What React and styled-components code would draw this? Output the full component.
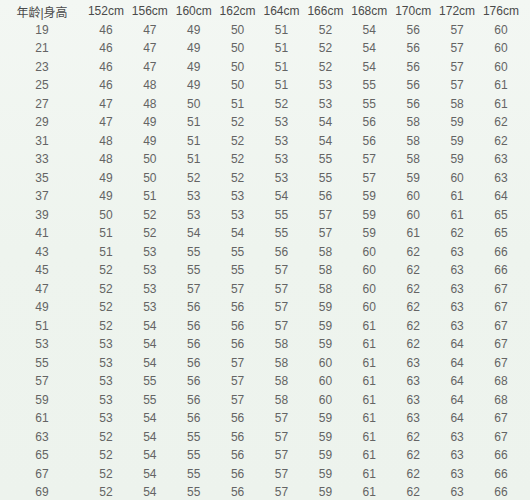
import React from "react";
import styled, { createGlobalStyle } from "styled-components";

const GlobalStyle = createGlobalStyle`
  html, body {
    margin: 0;
    padding: 0;
    background: #eef4ee;
  }
  body {
    font-family: "Liberation Sans", Arial, sans-serif;
  }
`;

const Page = styled.div`
  width: 530px;
  height: 500px;
  box-sizing: border-box;
  padding-top: 2px;
  background: linear-gradient(180deg, #f3f7f3 0%, #eef4ee 50%, #edf3ed 100%);
  overflow: hidden;
`;

const Table = styled.div`
  display: grid;
  grid-template-columns: 84px repeat(10, 43.9px);
  grid-auto-rows: 18.5px;
`;

const Cell = styled.div`
  display: flex;
  align-items: center;
  justify-content: center;
  white-space: nowrap;
  font-size: 12px;
  color: ${(p) => (p.$head ? "#4a4a4a" : "#646464")};
  font-family: ${(p) =>
    p.$cjk
      ? '"Liberation Sans", "Noto Sans CJK SC", sans-serif'
      : '"Liberation Sans", Arial, sans-serif'};
`;

const heights = ["152cm", "156cm", "160cm", "162cm", "164cm", "166cm", "168cm", "170cm", "172cm", "176cm"];

const rows = [
  [19, 46, 47, 49, 50, 51, 52, 54, 56, 57, 60],
  [21, 46, 47, 49, 50, 51, 52, 54, 56, 57, 60],
  [23, 46, 47, 49, 50, 51, 52, 54, 56, 57, 60],
  [25, 46, 48, 49, 50, 51, 53, 55, 56, 57, 61],
  [27, 47, 48, 50, 51, 52, 53, 55, 56, 58, 61],
  [29, 47, 49, 51, 52, 53, 54, 56, 58, 59, 62],
  [31, 48, 49, 51, 52, 53, 54, 56, 58, 59, 62],
  [33, 48, 50, 51, 52, 53, 55, 57, 58, 59, 63],
  [35, 49, 50, 52, 52, 53, 55, 57, 59, 60, 63],
  [37, 49, 51, 53, 53, 54, 56, 59, 60, 61, 64],
  [39, 50, 52, 53, 53, 55, 57, 59, 60, 61, 65],
  [41, 51, 52, 54, 54, 55, 57, 59, 61, 62, 65],
  [43, 51, 53, 55, 55, 56, 58, 60, 62, 63, 66],
  [45, 52, 53, 55, 55, 57, 58, 60, 62, 63, 66],
  [47, 52, 53, 57, 57, 57, 58, 60, 62, 63, 67],
  [49, 52, 53, 56, 56, 57, 59, 60, 62, 63, 67],
  [51, 52, 54, 56, 56, 57, 59, 61, 62, 63, 67],
  [53, 53, 54, 56, 56, 58, 59, 61, 62, 64, 67],
  [55, 53, 54, 56, 57, 58, 60, 61, 63, 64, 67],
  [57, 53, 55, 56, 57, 58, 60, 61, 63, 64, 68],
  [59, 53, 55, 56, 57, 58, 60, 61, 63, 64, 68],
  [61, 53, 54, 56, 56, 57, 59, 61, 63, 64, 67],
  [63, 52, 54, 55, 56, 57, 59, 61, 62, 63, 67],
  [65, 52, 54, 55, 56, 57, 59, 61, 62, 63, 66],
  [67, 52, 54, 55, 56, 57, 59, 61, 62, 63, 66],
  [69, 52, 54, 55, 56, 57, 59, 61, 62, 63, 66],
];

export default function App() {
  return (
    <>
      <GlobalStyle />
      <Page>
        <Table>
          <Cell $head $cjk>年龄|身高</Cell>
          {heights.map((h) => (
            <Cell key={h} $head>{h}</Cell>
          ))}
          {rows.map((r) =>
            r.map((v, i) => <Cell key={`${r[0]}-${i}`}>{v}</Cell>)
          )}
        </Table>
      </Page>
    </>
  );
}
